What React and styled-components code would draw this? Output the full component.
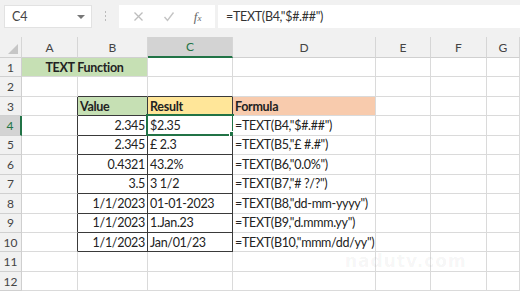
import React from "react";
import styled, { createGlobalStyle } from "styled-components";

const Global = createGlobalStyle`
  body {
    margin: 0;
    background: #ffffff;
    font-family: Lato, "Open Sans", sans-serif;
    overflow: hidden;
  }
`;

const Page = styled.div`
  width: 520px;
  height: 292px;
  position: relative;
  overflow: hidden;
  background: #fff;
`;

const Bar = styled.div`
  height: 37px;
  background: #f1f1f1;
  display: flex;
  align-items: flex-start;
  padding-top: 5px;
  box-sizing: border-box;
`;

const NameBox = styled.div`
  margin-left: 4px;
  width: 88px;
  height: 23px;
  background: #fff;
  border: 1px solid #e2e2e2;
  box-sizing: border-box;
  display: flex;
  align-items: center;
  justify-content: space-between;
  padding: 0 6px 0 7px;
  font-size: 12.5px;
  color: #444;
`;

const Caret = styled.span`
  width: 0;
  height: 0;
  border-left: 4px solid transparent;
  border-right: 4px solid transparent;
  border-top: 4px solid #777;
`;

const Dots = styled.div`
  width: 27px;
  display: flex;
  flex-direction: column;
  align-items: center;
  gap: 2px;
  padding-top: 6px;
  span {
    width: 1px;
    height: 2px;
    background: #bbb;
  }
`;

const Buttons = styled.div`
  width: 96px;
  height: 23px;
  background: #fff;
  display: flex;
  align-items: center;
  justify-content: space-around;
  padding: 0 4px;
  box-sizing: border-box;
  color: #b5b5b5;
`;

const Fx = styled.span`
  font-family: "Liberation Serif", serif;
  font-style: italic;
  font-size: 13px;
  color: #666;
  span {
    font-size: 9px;
  }
`;

const FormulaInput = styled.div`
  margin-left: 3px;
  flex: 1;
  height: 23px;
  background: #fff;
  display: flex;
  align-items: center;
  padding-left: 8px;
  font-size: 12.5px;
  letter-spacing: -0.3px;
  color: #333;
`;

const Sheet = styled.div`
  display: grid;
  grid-template-columns: 22px 56px 70px 85px 143px 55px 56px 33px;
  grid-template-rows: 21px repeat(12, 19.45px);
`;

const Head = styled.div`
  background: ${(p) => (p.$active ? "#d3d3d3" : "#f1f1f1")};
  border-right: 1px solid ${(p) => (p.$row ? "#cfcfcf" : "#d6d6d6")};
  border-bottom: 1px solid #d0d0d0;
  ${(p) => p.$active && p.$col && "border-bottom: 2px solid #217346;"}
  ${(p) => p.$active && p.$row && "border-right: 2px solid #217346;"}
  box-sizing: border-box;
  display: flex;
  align-items: center;
  justify-content: center;
  font-size: 12px;
  color: ${(p) => (p.$active ? "#217346" : "#444")};
  position: relative;
`;

const Corner = styled(Head)`
  align-items: flex-end;
  justify-content: flex-end;
  padding: 0 3px 3px 0;
`;

const Cell = styled.div`
  grid-column: span ${(p) => p.$span || 1};
  background: ${(p) => p.$bg || "#fff"};
  border-right: 1px solid ${(p) => (p.$darkRight ? "#3a3a3a" : "#dadada")};
  border-bottom: 1px solid ${(p) => (p.$darkBottom ? "#3a3a3a" : "#dadada")};
  box-sizing: border-box;
  display: flex;
  align-items: center;
  justify-content: ${(p) => (p.$align === "right" ? "flex-end" : p.$align === "center" ? "center" : "flex-start")};
  padding: 0 2px 0 2px;
  font-size: 12.5px;
  letter-spacing: -0.3px;
  font-weight: ${(p) => (p.$bold ? 700 : 400)};
  color: #222;
  white-space: nowrap;
  position: relative;
`;

const Selection = styled.div`
  position: absolute;
  left: -2px;
  top: -2px;
  right: -2px;
  bottom: -1px;
  border: 2px solid #217346;
  pointer-events: none;
  &::after {
    content: "";
    position: absolute;
    right: -4px;
    bottom: -4px;
    width: 5px;
    height: 5px;
    background: #217346;
    border: 1px solid #fff;
  }
`;

const Watermark = styled.div`
  position: absolute;
  left: 345px;
  top: 251px;
  font-family: "DejaVu Sans", sans-serif;
  font-weight: 700;
  font-size: 17px;
  letter-spacing: 1px;
  color: rgba(0, 0, 0, 0.05);
`;

const cols = ["A", "B", "C", "D", "E", "F", "G"];

const data = {
  3: { B: ["Value", "#c6e0b4", true], C: ["Result", "#ffe699", true], D: ["Formula", "#f8cbad", true] },
  4: { B: "2.345", C: "$2.35", D: '=TEXT(B4,"$#.##")' },
  5: { B: "2.345", C: "£ 2.3", D: '=TEXT(B5,"£ #.#")' },
  6: { B: "0.4321", C: "43.2%", D: '=TEXT(B6,"0.0%")' },
  7: { B: "3.5", C: "3 1/2", D: '=TEXT(B7,"# ?/?")' },
  8: { B: "1/1/2023", C: "01-01-2023", D: '=TEXT(B8,"dd-mm-yyyy")' },
  9: { B: "1/1/2023", C: "1.Jan.23", D: '=TEXT(B9,"d.mmm.yy")' },
  10: { B: "1/1/2023", C: "Jan/01/23", D: '=TEXT(B10,"mmm/dd/yy")' },
};

function renderRow(r) {
  const cells = [];
  if (r === 1) {
    cells.push(
      <Cell key="A1" $span={2} $bg="#c6e0b4" $bold $align="center">
        TEXT Function
      </Cell>
    );
    ["C", "D", "E", "F", "G"].forEach((c) => cells.push(<Cell key={c + r} />));
    return cells;
  }
  cols.forEach((c) => {
    const inTable = r >= 3 && r <= 10;
    const darkRight = inTable && (c === "A" || c === "B" || c === "C");
    const darkBottom = r >= 2 && r <= 10 && (c === "B" || c === "C");
    const v = data[r] && data[r][c];
    let text = null;
    let bg;
    let bold = false;
    if (Array.isArray(v)) {
      [text, bg, bold] = v;
    } else if (v) {
      text = v;
    }
    cells.push(
      <Cell
        key={c + r}
        $bg={bg}
        $bold={bold}
        $darkRight={darkRight}
        $darkBottom={darkBottom}
        $align={c === "B" && r > 3 ? "right" : "left"}
      >
        {text}
        {r === 4 && c === "C" && <Selection />}
      </Cell>
    );
  });
  return cells;
}

export default function App() {
  const rows = Array.from({ length: 12 }, (_, i) => i + 1);
  return (
    <Page>
      <Global />
      <Bar>
        <NameBox>
          C4
          <Caret />
        </NameBox>
        <Dots>
          <span />
          <span />
          <span />
        </Dots>
        <Buttons>
          <svg width="11" height="11" viewBox="0 0 11 11">
            <path d="M1.5 1.5 L9.5 9.5 M9.5 1.5 L1.5 9.5" stroke="#bdbdbd" strokeWidth="1.3" />
          </svg>
          <svg width="12" height="11" viewBox="0 0 12 11">
            <path d="M1.5 6 L4.5 9.5 L10.5 1.5" stroke="#c4c4c4" strokeWidth="1.4" fill="none" />
          </svg>
          <Fx>
            f<span>x</span>
          </Fx>
        </Buttons>
        <FormulaInput>=TEXT(B4,"$#.##")</FormulaInput>
      </Bar>
      <Sheet>
        <Corner>
          <svg width="10" height="10" viewBox="0 0 10 10">
            <path d="M10 0 L10 10 L0 10 Z" fill="#c6c6c6" />
          </svg>
        </Corner>
        {cols.map((c) => (
          <Head key={c} $col $active={c === "C"}>
            {c}
          </Head>
        ))}
        {rows.map((r) => (
          <React.Fragment key={r}>
            <Head $row $active={r === 4}>
              {r}
            </Head>
            {renderRow(r)}
          </React.Fragment>
        ))}
      </Sheet>
      <Watermark>nadutv.com</Watermark>
    </Page>
  );
}
